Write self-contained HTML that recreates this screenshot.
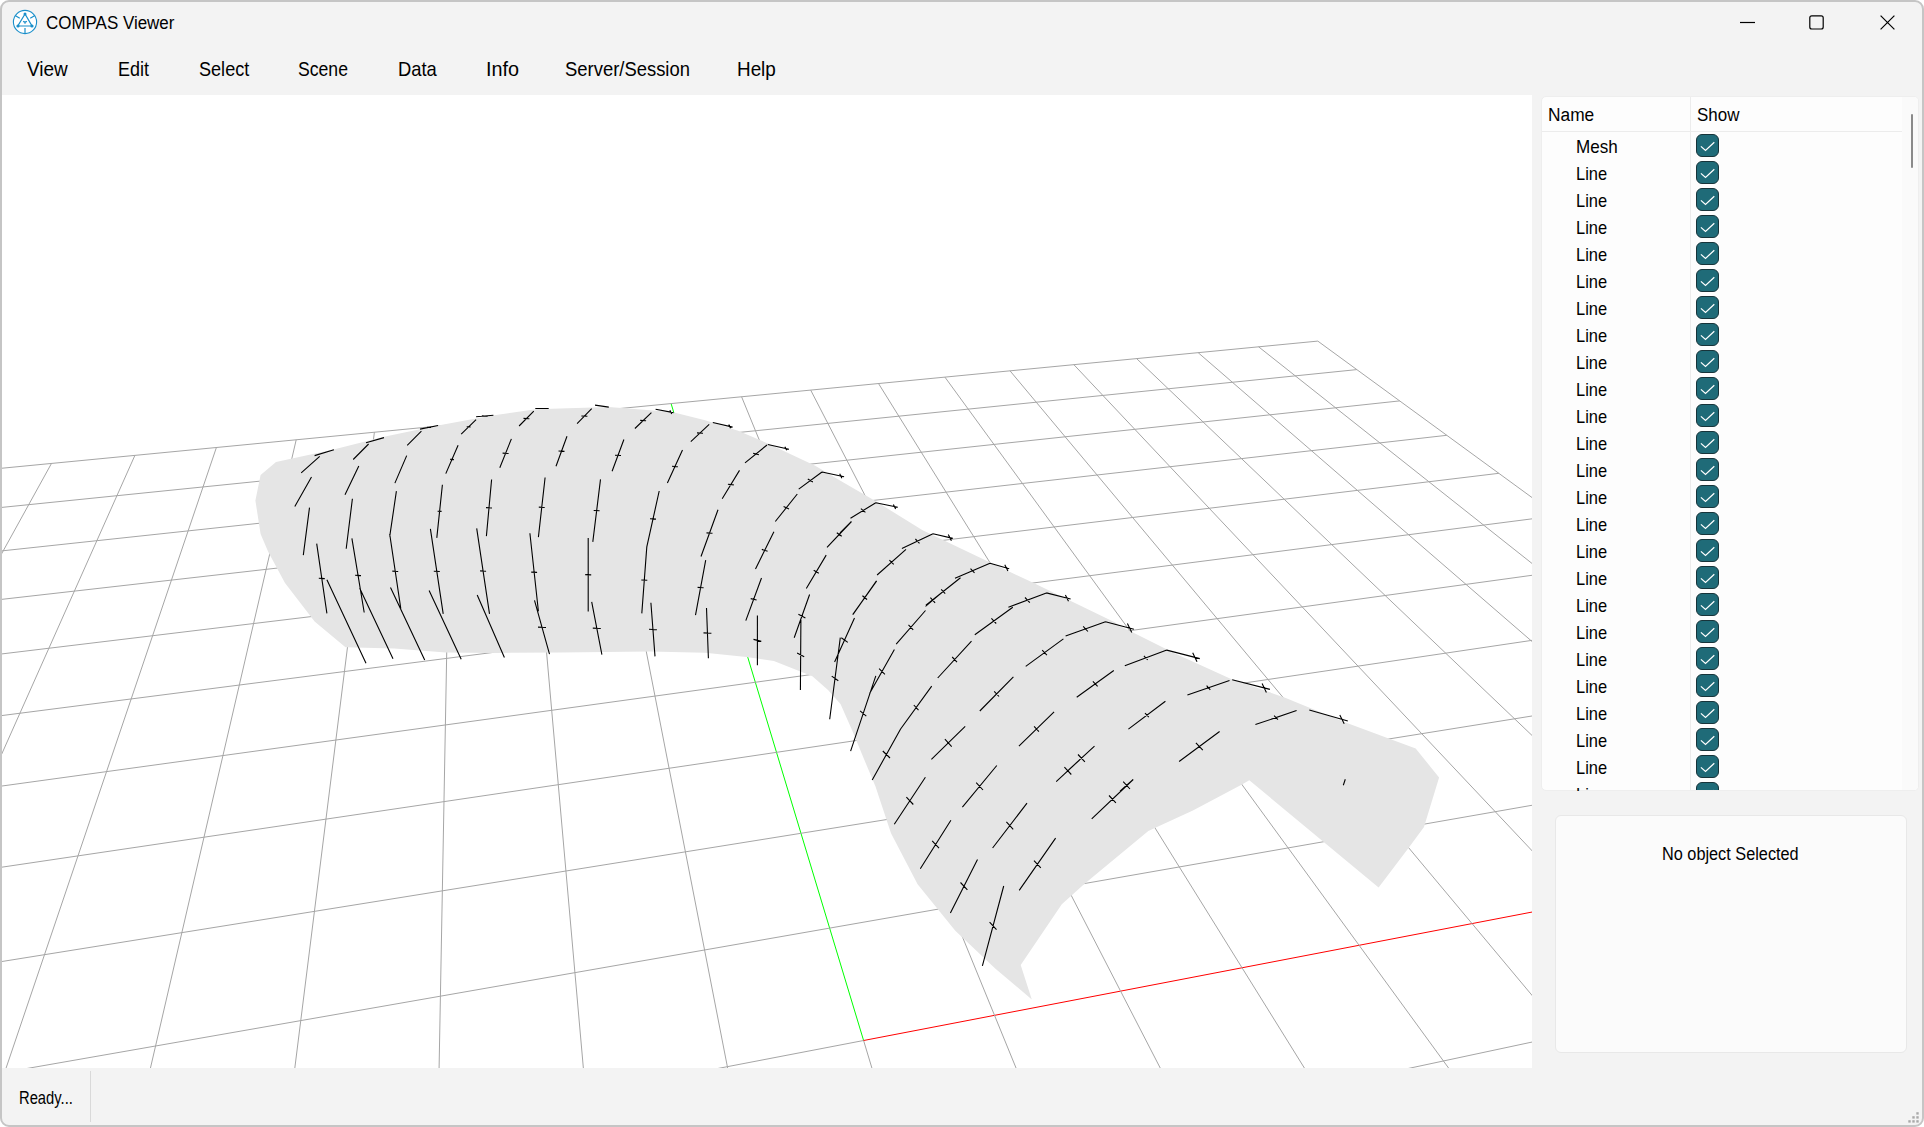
<!DOCTYPE html>
<html><head><meta charset="utf-8">
<style>
html,body{margin:0;padding:0;background:#ffffff;width:1924px;height:1127px;overflow:hidden;}
*{box-sizing:border-box;}
.t{position:absolute;font-family:"Liberation Sans",sans-serif;color:#000;white-space:nowrap;line-height:1;transform-origin:0 0;}
#win{position:absolute;left:0;top:0;width:1924px;height:1127px;background:#f3f3f3;border:2px solid #c5c5c5;border-radius:9px;}
#tree{position:absolute;left:1541px;top:96px;width:378px;height:695px;background:#fdfdfd;border:1px solid #eeeeee;border-radius:5px;overflow:hidden;}
#info{position:absolute;left:1555px;top:815px;width:352px;height:238px;background:#fbfbfb;border:1px solid #e8e8e8;border-radius:6px;}
.cb{position:absolute;left:154px;width:23px;height:23px;border-radius:6px;background:#1f6b78;border:1.2px solid #17343a;}
</style></head><body>
<div id="win"></div>
<svg style="position:absolute;left:0;top:0" width="60" height="45" viewBox="0 0 60 45">
  <circle cx="25" cy="22" r="11.6" fill="#fff" stroke="#1a8fca" stroke-width="1.1"/>
  <path d="M25 14 L17.8 26 L32 26 Z" fill="none" stroke="#1a8fca" stroke-width="1.2"/>
  <circle cx="25" cy="14" r="1.5" fill="#1a8fca"/>
  <circle cx="18" cy="26" r="1.6" fill="#1a8fca"/>
  <circle cx="32" cy="26" r="1.6" fill="#1a8fca"/>
  <path d="M15.5 15.7 L19.8 18.3 M34.5 15.7 L30.2 18.3 M25 28 L25 33.4 M23.2 21.2 Q25 22.6 26.8 21.2 M25 22 L25 23.8" fill="none" stroke="#1a8fca" stroke-width="1.2"/>
</svg>
<div class="t" style="left:46.40px;top:12.86px;font-size:19.19px;transform:scaleX(0.8835);color:#000;">COMPAS Viewer</div>
<svg style="position:absolute;left:1720px;top:0" width="204" height="45" viewBox="1720 0 204 45">
  <path d="M1740 22.5 H1755" stroke="#000" stroke-width="1.2"/>
  <rect x="1809.8" y="15.8" width="13.4" height="13.2" rx="2" fill="none" stroke="#000" stroke-width="1.2"/>
  <path d="M1880.6 15.6 L1894.4 29.4 M1894.4 15.6 L1880.6 29.4" stroke="#000" stroke-width="1.2"/>
</svg>
<div class="t" style="left:26.80px;top:58.72px;font-size:20.06px;transform:scaleX(0.9461);color:#000;">View</div>
<div class="t" style="left:118.00px;top:58.72px;font-size:20.06px;transform:scaleX(0.8959);color:#000;">Edit</div>
<div class="t" style="left:199.00px;top:58.72px;font-size:20.06px;transform:scaleX(0.9021);color:#000;">Select</div>
<div class="t" style="left:298.20px;top:58.72px;font-size:20.06px;transform:scaleX(0.8793);color:#000;">Scene</div>
<div class="t" style="left:397.60px;top:58.72px;font-size:20.06px;transform:scaleX(0.9170);color:#000;">Data</div>
<div class="t" style="left:486.10px;top:58.72px;font-size:20.06px;transform:scaleX(0.9881);color:#000;">Info</div>
<div class="t" style="left:565.00px;top:58.72px;font-size:20.06px;transform:scaleX(0.9192);color:#000;">Server/Session</div>
<div class="t" style="left:736.60px;top:58.72px;font-size:20.06px;transform:scaleX(0.9413);color:#000;">Help</div>
<svg style="position:absolute;left:0;top:0" width="1924" height="1127" viewBox="0 0 1924 1127">
<defs><clipPath id="vc"><rect x="2" y="95" width="1530" height="973"/></clipPath></defs>
<g clip-path="url(#vc)">
<rect x="2" y="95" width="1530" height="973" fill="#fff"/>
<g stroke-width="1" fill="none" shape-rendering="auto">
<path d="M-3.0 562.1L51.5 463.4" stroke="#a6a6a6"/>
<path d="M-3.0 764.6L134.9 455.4" stroke="#a6a6a6"/>
<path d="M4.4 1073.0L216.4 447.5" stroke="#a6a6a6"/>
<path d="M149.3 1073.0L296.2 439.8" stroke="#a6a6a6"/>
<path d="M294.2 1073.0L374.4 432.2" stroke="#a6a6a6"/>
<path d="M439.0 1073.0L450.9 424.8" stroke="#a6a6a6"/>
<path d="M583.8 1073.0L525.8 417.6" stroke="#a6a6a6"/>
<path d="M728.6 1073.0L599.2 410.5" stroke="#a6a6a6"/>
<path d="M1387.1 1073.0L1537.0 1041.0" stroke="#a6a6a6"/>
<path d="M873.4 1073.0L863.6 1040.5" stroke="#a6a6a6"/>
<path d="M863.6 1040.5L671.1 403.6" stroke="#00ff00"/>
<path d="M694.4 1073.0L863.6 1040.5" stroke="#a6a6a6"/>
<path d="M863.6 1040.5L1537.0 911.1" stroke="#ff0000"/>
<path d="M1018.1 1073.0L741.6 396.8" stroke="#a6a6a6"/>
<path d="M1.2 1073.0L1537.0 804.4" stroke="#a6a6a6"/>
<path d="M1162.8 1073.0L810.7 390.1" stroke="#a6a6a6"/>
<path d="M-3.0 962.3L1537.0 715.2" stroke="#a6a6a6"/>
<path d="M1307.5 1073.0L878.5 383.5" stroke="#a6a6a6"/>
<path d="M-3.0 867.9L1537.0 639.6" stroke="#a6a6a6"/>
<path d="M1452.2 1073.0L944.9 377.1" stroke="#a6a6a6"/>
<path d="M-3.0 786.7L1537.0 574.6" stroke="#a6a6a6"/>
<path d="M1537.0 1001.3L1010.0 370.8" stroke="#a6a6a6"/>
<path d="M-3.0 716.2L1537.0 518.2" stroke="#a6a6a6"/>
<path d="M1537.0 856.0L1073.9 364.7" stroke="#a6a6a6"/>
<path d="M-3.0 654.5L1498.9 473.3" stroke="#a6a6a6"/>
<path d="M1537.0 740.2L1136.6 358.6" stroke="#a6a6a6"/>
<path d="M-3.0 599.9L1446.8 435.3" stroke="#a6a6a6"/>
<path d="M1537.0 645.8L1198.2 352.7" stroke="#a6a6a6"/>
<path d="M-3.0 551.4L1399.7 400.9" stroke="#a6a6a6"/>
<path d="M1537.0 567.4L1258.6 346.8" stroke="#a6a6a6"/>
<path d="M-3.0 507.9L1356.9 369.6" stroke="#a6a6a6"/>
<path d="M1537.0 501.2L1317.8 341.1" stroke="#a6a6a6"/>
<path d="M-3.0 468.7L1317.8 341.1" stroke="#a6a6a6"/>
</g>
<polygon points="255.4,500.6 260.6,474.9 276.0,462.0 332.6,449.7 384.0,436.8 438.1,425.5 490.8,415.7 535.8,409.3 560.0,408.5 608.8,407.1 672.1,412.0 705.1,420.3 738.1,430.7 768.4,443.7 815.2,465.7 840.0,480.6 875.8,501.3 922.6,530.2 988.6,561.8 1032.6,582.5 1115.2,622.4 1120.0,626.1 1175.0,653.6 1230.0,678.4 1285.1,697.7 1345.6,722.4 1415.7,748.6 1439.1,777.4 1424.0,827.0 1408.9,847.6 1378.6,887.5 1249.3,780.2 1241.0,784.9 1192.9,810.5 1148.3,831.0 1084.0,884.2 1061.8,904.2 1020.7,965.1 1031.8,999.5 995.2,968.5 955.3,930.8 917.6,884.2 891.0,833.2 875.5,786.6 864.4,760.0 852.0,730.0 840.5,704.0 828.0,690.0 812.4,676.2 773.9,661.0 746.4,656.9 705.1,652.8 650.0,651.4 560.0,652.4 497.2,652.9 445.8,652.4 394.3,648.5 345.5,647.2 314.6,621.5 285.0,583.0 268.3,552.0 260.6,534.0" fill="#e5e5e5"/>
<path d="M314.6 455.6L333.9 449.7M301.2 472.8L319.7 456.4M294.8 506.5L311.5 476.9M303.3 555.1L309.5 507.6M316.7 543.6L326.9 613.3M326.9 579.8L366.0 663.2M366.0 442.7L384.0 437.6M353.2 459.5L368.6 444.0M345.0 494.7L358.8 466.1M346.2 548.7L352.4 498.8M351.9 538.4L364.2 612.5M359.6 588.1L393.0 658.8M420.0 429.1L438.1 425.5M407.2 445.3L421.4 431.2M394.9 483.1L406.7 455.6M389.7 536.6L396.4 491.1M389.7 534.0L400.8 608.6M390.5 587.6L424.7 660.1M476.1 416.8L493.4 415.2M461.2 434.2L476.1 419.6M445.8 473.6L458.1 445.3M436.8 537.9L442.4 484.7M430.4 528.9L443.2 613.8M429.1 590.6L461.2 659.3M535.3 408.5L548.7 408.5M519.1 426.0L533.8 411.1M499.8 467.7L511.4 438.9M486.4 536.1L491.6 479.5M476.7 528.4L489.5 613.8M477.2 595.0L504.4 657.5M538.4 537.1L545.1 477.5M529.9 533.3L538.4 611.2M534.5 600.4L549.5 654.2M577.1 423.6L591.7 408.7M595.0 405.1L608.8 407.1M556.0 466.2L567.0 436.2M655.6 409.3L673.5 412.6M634.9 428.5L651.4 412.6M612.1 471.2L623.9 439.5M592.8 541.9L600.5 479.4M588.2 538.0L588.2 611.5M591.7 601.9L601.9 654.7M712.8 422.5L732.6 427.1M690.8 441.7L709.2 424.4M667.4 483.0L682.5 450.0M646.8 546.9L659.2 491.0M641.8 613.4L646.8 546.9M650.9 602.7L655.0 656.4M767.8 444.5L789.0 449.2M745.0 462.9L767.0 445.0M722.2 498.7L739.5 470.4M701.0 556.5L718.0 509.7M695.5 615.1L705.7 560.1M706.5 607.9L708.4 658.3M822.0 472.0L844.1 476.7M798.7 489.1L822.0 472.0M775.3 521.5L797.3 494.0M755.5 568.9L773.9 531.7M745.8 620.6L761.5 578.0M757.4 615.6L757.4 665.2M827.0 547.4L851.5 521.5M806.3 588.5L826.2 555.1M794.2 637.7L809.6 594.5M800.4 690.0L800.9 619.9M829.7 719.2L840.3 637.6M834.6 662.0L854.5 618.1M852.7 614.6L876.7 580.9M850.6 751.2L875.8 675.8M869.6 693.5L894.4 649.5M896.2 644.2L925.5 610.5M925.5 606.3L940.0 594.2M872.2 780.0L900.6 729.0M900.6 729.0L931.7 686.1M850.5 518.3L875.8 502.7M875.8 502.7L897.8 507.3M840.0 532.9L851.0 521.9M853.2 614.1L876.3 581.1M901.9 548.6L933.0 533.7M933.0 533.7L952.8 538.4M877.1 575.0L906.0 549.4M955.0 578.3L990.0 563.2M990.0 563.2L1009.2 568.7M925.9 605.3L960.5 577.8M937.7 678.0L971.5 641.1M1008.4 607.2L1046.4 592.9M1046.4 592.9L1070.6 599.0M974.8 634.7L1012.8 607.2M979.8 711.0L1013.4 676.8M931.4 759.4L965.2 726.4M1065.6 636.1L1105.5 621.8M1105.5 621.8L1133.9 629.2M1025.7 666.4L1063.4 638.9M1018.9 746.2L1054.1 711.8M1076.7 697.2L1113.8 670.5M1068.4 770.1L1094.5 746.2M1124.8 665.8L1166.8 650.1M1166.8 650.1L1199.8 658.6M1128.4 729.1L1165.4 701.2M1120.0 791.2L1133.2 779.4M1187.4 694.9L1229.5 680.6M1232.2 679.8L1269.9 689.4M1179.1 761.5L1219.6 731.5M1255.4 724.6L1296.6 710.6M1309.3 710.0L1347.8 721.0M1343.3 785.2L1345.3 779.3M894.3 824.3L925.4 777.3M920.3 868.7L950.9 820.3M950.4 913.0L977.5 859.4M982.4 965.8L1003.7 886.0M962.4 807.2L996.8 765.5M992.6 848.0L1027.0 803.2M1019.2 890.4L1055.6 838.1M1056.2 781.7L1079.5 760.0M1091.7 818.8L1133.2 779.5M318.8 578.3L324.8 578.6M355.1 575.3L361.0 575.6M427.1 427.2L431.0 427.4M392.3 571.1L398.2 571.5M481.8 415.8L487.7 416.2M466.7 426.8L470.6 427.0M450.0 459.3L453.9 459.6M437.6 511.2L441.6 511.4M433.8 571.2L439.8 571.5M523.5 418.4L529.4 418.7M502.6 453.1L508.6 453.5M486.0 507.6L492.0 508.0M480.1 570.9L486.1 571.3M538.8 507.1L544.7 507.5M531.2 572.1L537.1 572.4M538.0 627.1L546.0 627.5M581.4 416.0L587.4 416.3M558.5 451.0L564.5 451.4M669.9 410.3L671.7 413.9M640.2 420.4L646.1 420.7M615.0 455.2L621.0 455.5M593.7 510.5L599.6 510.8M585.2 574.6L591.2 574.9M592.8 628.1L600.8 628.5M728.8 424.6L730.5 428.2M697.0 432.9L703.0 433.2M672.0 466.3L677.9 466.7M650.0 518.8L656.0 519.1M641.3 580.0L647.3 580.3M649.0 629.3L656.9 629.8M784.9 446.7L786.7 450.3M753.1 453.2L758.9 454.7M727.9 484.2L733.8 484.9M706.5 532.9L712.5 533.3M697.6 587.4L703.6 587.8M703.5 632.9L711.4 633.3M839.7 473.7L841.9 478.2M807.8 479.1L812.9 482.0M783.6 506.5L789.0 509.0M761.8 549.4L767.6 551.2M750.7 598.6L756.6 600.0M753.5 639.4L761.3 641.4M836.8 532.7L841.7 536.2M813.7 570.3L818.8 573.3M798.4 614.2L805.4 618.0M797.1 653.1L804.2 656.8M831.7 676.1L838.3 680.7M841.3 637.7L847.8 642.4M862.4 595.8L867.0 599.7M860.1 710.9L866.3 716.1M879.1 668.7L884.9 674.3M908.5 624.8L913.2 629.9M930.4 597.7L935.1 602.8M882.8 751.0L890.0 758.0M913.8 705.0L918.5 710.1M860.9 508.6L865.4 512.4M893.4 504.4L895.6 508.9M862.5 595.7L867.0 599.5M915.4 539.0L919.5 543.3M948.3 534.5L951.4 540.8M889.4 560.1L893.7 564.3M970.5 568.6L974.5 572.9M1004.8 564.7L1007.9 571.0M941.2 589.4L945.2 593.7M952.2 657.0L957.0 662.1M1025.0 597.5L1029.8 602.6M1065.4 594.9L1068.5 601.2M991.4 618.4L996.2 623.5M994.2 691.3L999.0 696.5M944.9 739.2L951.7 746.6M1083.2 626.4L1087.9 631.5M1127.4 623.6L1131.8 632.6M1042.2 650.1L1046.9 655.2M1034.1 726.4L1038.9 731.6M1092.9 681.3L1097.6 686.4M1078.0 754.5L1084.9 761.8M1143.9 655.9L1147.7 660.0M1192.7 652.8L1197.0 661.8M1145.0 713.1L1148.8 717.2M1123.2 781.6L1130.0 789.0M1206.6 685.7L1210.3 689.8M1262.1 683.5L1266.4 692.5M1195.9 742.8L1202.8 750.2M1274.1 715.6L1277.9 719.6M1339.8 714.9L1344.2 723.8M906.4 797.1L913.3 804.5M932.2 840.8L939.0 848.2M960.5 882.5L967.4 889.9M989.6 922.2L996.5 929.6M976.2 782.7L983.0 790.0M1006.4 821.9L1013.2 829.3M1034.0 860.6L1040.8 867.9M1064.4 767.2L1071.3 774.5M1109.0 795.5L1115.9 802.8" stroke="#000" stroke-width="1.1" fill="none"/>
</g></svg>
<div id="tree">
<div style="position:absolute;left:148px;top:0;width:1px;height:695px;background:#ececec"></div>
<div style="position:absolute;left:0;top:34px;width:360px;height:1px;background:#ececec"></div>
<div style="position:absolute;left:360px;top:0;width:18px;height:695px;background:#fafafa"></div>
<div style="position:absolute;left:369px;top:17px;width:1.6px;height:54px;border-radius:1px;background:#8a8a8a"></div>
<div class="cb" style="top:37.0px"><svg width="21" height="21" viewBox="0 0 21 21" style="position:absolute;left:0;top:0"><path d="M3.9 11.4 L8.5 15.4 L17.3 7.2" fill="none" stroke="#fff" stroke-width="1.25"/></svg></div>
<div class="cb" style="top:64.0px"><svg width="21" height="21" viewBox="0 0 21 21" style="position:absolute;left:0;top:0"><path d="M3.9 11.4 L8.5 15.4 L17.3 7.2" fill="none" stroke="#fff" stroke-width="1.25"/></svg></div>
<div class="cb" style="top:91.0px"><svg width="21" height="21" viewBox="0 0 21 21" style="position:absolute;left:0;top:0"><path d="M3.9 11.4 L8.5 15.4 L17.3 7.2" fill="none" stroke="#fff" stroke-width="1.25"/></svg></div>
<div class="cb" style="top:118.0px"><svg width="21" height="21" viewBox="0 0 21 21" style="position:absolute;left:0;top:0"><path d="M3.9 11.4 L8.5 15.4 L17.3 7.2" fill="none" stroke="#fff" stroke-width="1.25"/></svg></div>
<div class="cb" style="top:145.0px"><svg width="21" height="21" viewBox="0 0 21 21" style="position:absolute;left:0;top:0"><path d="M3.9 11.4 L8.5 15.4 L17.3 7.2" fill="none" stroke="#fff" stroke-width="1.25"/></svg></div>
<div class="cb" style="top:172.0px"><svg width="21" height="21" viewBox="0 0 21 21" style="position:absolute;left:0;top:0"><path d="M3.9 11.4 L8.5 15.4 L17.3 7.2" fill="none" stroke="#fff" stroke-width="1.25"/></svg></div>
<div class="cb" style="top:199.0px"><svg width="21" height="21" viewBox="0 0 21 21" style="position:absolute;left:0;top:0"><path d="M3.9 11.4 L8.5 15.4 L17.3 7.2" fill="none" stroke="#fff" stroke-width="1.25"/></svg></div>
<div class="cb" style="top:226.0px"><svg width="21" height="21" viewBox="0 0 21 21" style="position:absolute;left:0;top:0"><path d="M3.9 11.4 L8.5 15.4 L17.3 7.2" fill="none" stroke="#fff" stroke-width="1.25"/></svg></div>
<div class="cb" style="top:253.0px"><svg width="21" height="21" viewBox="0 0 21 21" style="position:absolute;left:0;top:0"><path d="M3.9 11.4 L8.5 15.4 L17.3 7.2" fill="none" stroke="#fff" stroke-width="1.25"/></svg></div>
<div class="cb" style="top:280.0px"><svg width="21" height="21" viewBox="0 0 21 21" style="position:absolute;left:0;top:0"><path d="M3.9 11.4 L8.5 15.4 L17.3 7.2" fill="none" stroke="#fff" stroke-width="1.25"/></svg></div>
<div class="cb" style="top:307.0px"><svg width="21" height="21" viewBox="0 0 21 21" style="position:absolute;left:0;top:0"><path d="M3.9 11.4 L8.5 15.4 L17.3 7.2" fill="none" stroke="#fff" stroke-width="1.25"/></svg></div>
<div class="cb" style="top:334.0px"><svg width="21" height="21" viewBox="0 0 21 21" style="position:absolute;left:0;top:0"><path d="M3.9 11.4 L8.5 15.4 L17.3 7.2" fill="none" stroke="#fff" stroke-width="1.25"/></svg></div>
<div class="cb" style="top:361.0px"><svg width="21" height="21" viewBox="0 0 21 21" style="position:absolute;left:0;top:0"><path d="M3.9 11.4 L8.5 15.4 L17.3 7.2" fill="none" stroke="#fff" stroke-width="1.25"/></svg></div>
<div class="cb" style="top:388.0px"><svg width="21" height="21" viewBox="0 0 21 21" style="position:absolute;left:0;top:0"><path d="M3.9 11.4 L8.5 15.4 L17.3 7.2" fill="none" stroke="#fff" stroke-width="1.25"/></svg></div>
<div class="cb" style="top:415.0px"><svg width="21" height="21" viewBox="0 0 21 21" style="position:absolute;left:0;top:0"><path d="M3.9 11.4 L8.5 15.4 L17.3 7.2" fill="none" stroke="#fff" stroke-width="1.25"/></svg></div>
<div class="cb" style="top:442.0px"><svg width="21" height="21" viewBox="0 0 21 21" style="position:absolute;left:0;top:0"><path d="M3.9 11.4 L8.5 15.4 L17.3 7.2" fill="none" stroke="#fff" stroke-width="1.25"/></svg></div>
<div class="cb" style="top:469.0px"><svg width="21" height="21" viewBox="0 0 21 21" style="position:absolute;left:0;top:0"><path d="M3.9 11.4 L8.5 15.4 L17.3 7.2" fill="none" stroke="#fff" stroke-width="1.25"/></svg></div>
<div class="cb" style="top:496.0px"><svg width="21" height="21" viewBox="0 0 21 21" style="position:absolute;left:0;top:0"><path d="M3.9 11.4 L8.5 15.4 L17.3 7.2" fill="none" stroke="#fff" stroke-width="1.25"/></svg></div>
<div class="cb" style="top:523.0px"><svg width="21" height="21" viewBox="0 0 21 21" style="position:absolute;left:0;top:0"><path d="M3.9 11.4 L8.5 15.4 L17.3 7.2" fill="none" stroke="#fff" stroke-width="1.25"/></svg></div>
<div class="cb" style="top:550.0px"><svg width="21" height="21" viewBox="0 0 21 21" style="position:absolute;left:0;top:0"><path d="M3.9 11.4 L8.5 15.4 L17.3 7.2" fill="none" stroke="#fff" stroke-width="1.25"/></svg></div>
<div class="cb" style="top:577.0px"><svg width="21" height="21" viewBox="0 0 21 21" style="position:absolute;left:0;top:0"><path d="M3.9 11.4 L8.5 15.4 L17.3 7.2" fill="none" stroke="#fff" stroke-width="1.25"/></svg></div>
<div class="cb" style="top:604.0px"><svg width="21" height="21" viewBox="0 0 21 21" style="position:absolute;left:0;top:0"><path d="M3.9 11.4 L8.5 15.4 L17.3 7.2" fill="none" stroke="#fff" stroke-width="1.25"/></svg></div>
<div class="cb" style="top:631.0px"><svg width="21" height="21" viewBox="0 0 21 21" style="position:absolute;left:0;top:0"><path d="M3.9 11.4 L8.5 15.4 L17.3 7.2" fill="none" stroke="#fff" stroke-width="1.25"/></svg></div>
<div class="cb" style="top:658.0px"><svg width="21" height="21" viewBox="0 0 21 21" style="position:absolute;left:0;top:0"><path d="M3.9 11.4 L8.5 15.4 L17.3 7.2" fill="none" stroke="#fff" stroke-width="1.25"/></svg></div>
<div class="cb" style="top:685.0px"><svg width="21" height="21" viewBox="0 0 21 21" style="position:absolute;left:0;top:0"><path d="M3.9 11.4 L8.5 15.4 L17.3 7.2" fill="none" stroke="#fff" stroke-width="1.25"/></svg></div>
</div>
<div style="position:absolute;left:0;top:0;width:1924px;height:791px;overflow:hidden;pointer-events:none">
<div class="t" style="left:1547.70px;top:105.97px;font-size:18.46px;transform:scaleX(0.9394);color:#000;">Name</div>
<div class="t" style="left:1697.20px;top:105.97px;font-size:18.46px;transform:scaleX(0.9191);color:#000;">Show</div>
<div class="t" style="left:1576.30px;top:137.97px;font-size:18.46px;transform:scaleX(0.9262);color:#000;">Mesh</div>
<div class="t" style="left:1576.30px;top:164.97px;font-size:18.46px;transform:scaleX(0.8914);color:#000;">Line</div>
<div class="t" style="left:1576.30px;top:191.97px;font-size:18.46px;transform:scaleX(0.8914);color:#000;">Line</div>
<div class="t" style="left:1576.30px;top:218.97px;font-size:18.46px;transform:scaleX(0.8914);color:#000;">Line</div>
<div class="t" style="left:1576.30px;top:245.97px;font-size:18.46px;transform:scaleX(0.8914);color:#000;">Line</div>
<div class="t" style="left:1576.30px;top:272.97px;font-size:18.46px;transform:scaleX(0.8914);color:#000;">Line</div>
<div class="t" style="left:1576.30px;top:299.97px;font-size:18.46px;transform:scaleX(0.8914);color:#000;">Line</div>
<div class="t" style="left:1576.30px;top:326.97px;font-size:18.46px;transform:scaleX(0.8914);color:#000;">Line</div>
<div class="t" style="left:1576.30px;top:353.97px;font-size:18.46px;transform:scaleX(0.8914);color:#000;">Line</div>
<div class="t" style="left:1576.30px;top:380.97px;font-size:18.46px;transform:scaleX(0.8914);color:#000;">Line</div>
<div class="t" style="left:1576.30px;top:407.97px;font-size:18.46px;transform:scaleX(0.8914);color:#000;">Line</div>
<div class="t" style="left:1576.30px;top:434.97px;font-size:18.46px;transform:scaleX(0.8914);color:#000;">Line</div>
<div class="t" style="left:1576.30px;top:461.97px;font-size:18.46px;transform:scaleX(0.8914);color:#000;">Line</div>
<div class="t" style="left:1576.30px;top:488.97px;font-size:18.46px;transform:scaleX(0.8914);color:#000;">Line</div>
<div class="t" style="left:1576.30px;top:515.97px;font-size:18.46px;transform:scaleX(0.8914);color:#000;">Line</div>
<div class="t" style="left:1576.30px;top:542.97px;font-size:18.46px;transform:scaleX(0.8914);color:#000;">Line</div>
<div class="t" style="left:1576.30px;top:569.97px;font-size:18.46px;transform:scaleX(0.8914);color:#000;">Line</div>
<div class="t" style="left:1576.30px;top:596.97px;font-size:18.46px;transform:scaleX(0.8914);color:#000;">Line</div>
<div class="t" style="left:1576.30px;top:623.97px;font-size:18.46px;transform:scaleX(0.8914);color:#000;">Line</div>
<div class="t" style="left:1576.30px;top:650.97px;font-size:18.46px;transform:scaleX(0.8914);color:#000;">Line</div>
<div class="t" style="left:1576.30px;top:677.97px;font-size:18.46px;transform:scaleX(0.8914);color:#000;">Line</div>
<div class="t" style="left:1576.30px;top:704.97px;font-size:18.46px;transform:scaleX(0.8914);color:#000;">Line</div>
<div class="t" style="left:1576.30px;top:731.97px;font-size:18.46px;transform:scaleX(0.8914);color:#000;">Line</div>
<div class="t" style="left:1576.30px;top:758.97px;font-size:18.46px;transform:scaleX(0.8914);color:#000;">Line</div>
<div class="t" style="left:1576.30px;top:785.97px;font-size:18.46px;transform:scaleX(0.8914);color:#000;">Line</div>
</div>
<div id="info"></div>
<div class="t" style="left:1662.30px;top:844.81px;font-size:18.90px;transform:scaleX(0.8618);color:#000;">No object Selected</div>
<div class="t" style="left:19.30px;top:1089.14px;font-size:18.02px;transform:scaleX(0.8193);color:#000;">Ready...</div>
<div style="position:absolute;left:90px;top:1071px;width:1px;height:51px;background:#d9d9d9;"></div>
<svg style="position:absolute;left:1900px;top:1105px" width="24" height="22" viewBox="1900 1105 24 22">
  <g fill="#a9a9a9"><rect x="1916.3" y="1112.2" width="2.4" height="2.4"/><rect x="1912.3" y="1116.2" width="2.4" height="2.4"/><rect x="1916.3" y="1116.2" width="2.4" height="2.4"/><rect x="1908.3" y="1120.2" width="2.4" height="2.4"/><rect x="1912.3" y="1120.2" width="2.4" height="2.4"/><rect x="1916.3" y="1120.2" width="2.4" height="2.4"/></g>
</svg>
</body></html>
